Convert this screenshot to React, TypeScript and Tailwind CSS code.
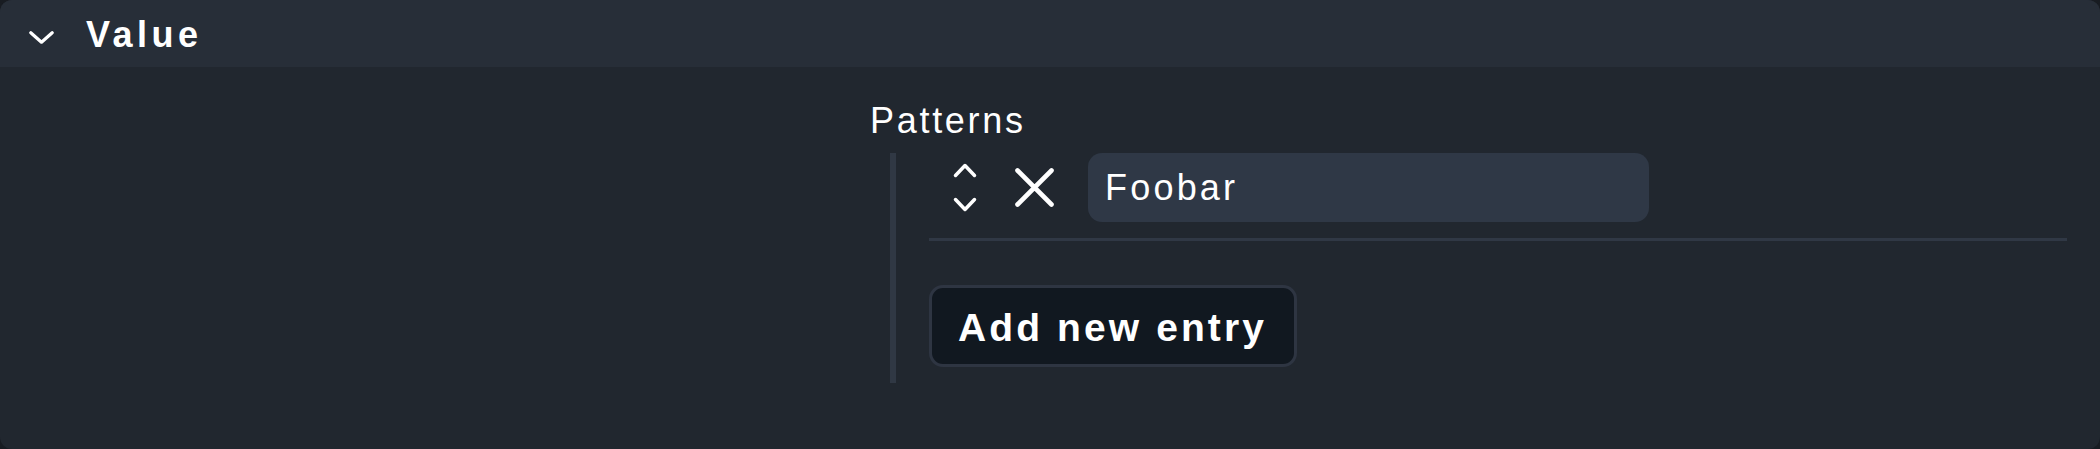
export default function App() {
  return (
    <div className="min-h-screen bg-[#181c22] font-['Liberation_Sans',Arial,sans-serif] text-white">
      <div className="flex h-[449px] flex-col overflow-hidden rounded-[12px] bg-[#21272f]">
        {/* Section header */}
        <div className="flex h-[67px] shrink-0 items-center bg-[#272e38]">
          <svg
            className="ml-[29px] mt-[8px]"
            width="25"
            height="13"
            viewBox="0 0 25 13"
            fill="none"
            stroke="white"
            strokeWidth="3.2"
            strokeLinecap="round"
            strokeLinejoin="round"
          >
            <path d="M1.8 1.8 L12.5 11.2 L23.2 1.8" />
          </svg>
          <span className="ml-[32px] mt-[3px] text-[36px] font-bold leading-[40px] tracking-[4.5px]">
            Value
          </span>
        </div>

        <div className="pl-[870px] pr-[33px] pt-[33px]">
          <div className="h-[40px] pt-[1px] text-[36px] leading-[40px] tracking-[2.7px]">
            Patterns
          </div>

          <div className="ml-[20px] mt-[13px] border-l-[6px] border-[#303844] pb-[16px] pl-[33px]">
            <div className="flex h-[69px] items-center">
              <button type="button" className="ml-[24px]">
                <svg
                  width="24"
                  height="49"
                  viewBox="0 0 24 49"
                  fill="none"
                  stroke="white"
                  strokeWidth="3.5"
                  strokeLinecap="round"
                  strokeLinejoin="round"
                >
                  <path d="M2.5 12.5 L12 2.5 L21.5 12.5" />
                  <path d="M2.5 36.5 L12 46.5 L21.5 36.5" />
                </svg>
              </button>
              <button type="button" className="ml-[38px]">
                <svg
                  width="39"
                  height="39"
                  viewBox="0 0 39 39"
                  fill="none"
                  stroke="white"
                  strokeWidth="4.6"
                  strokeLinecap="round"
                >
                  <path d="M2.5 2.5 L36.5 36.5 M36.5 2.5 L2.5 36.5" />
                </svg>
              </button>
              <div className="ml-[34px] flex h-[69px] w-[561px] items-center rounded-[14px] bg-[#2f3846] pl-[17px] text-[36px] tracking-[3.2px]">
                Foobar
              </div>
            </div>

            <div className="mt-[16px] h-[3px] bg-[#303845]" />

            <button
              type="button"
              className="mt-[44px] flex h-[82px] w-[368px] items-center rounded-[14px] border-[3px] border-[#2e3542] bg-[#111820] pl-[26px] pt-[4px] text-[39px] font-bold tracking-[3.1px]"
            >
              Add new entry
            </button>
          </div>
        </div>
      </div>
    </div>
  );
}
